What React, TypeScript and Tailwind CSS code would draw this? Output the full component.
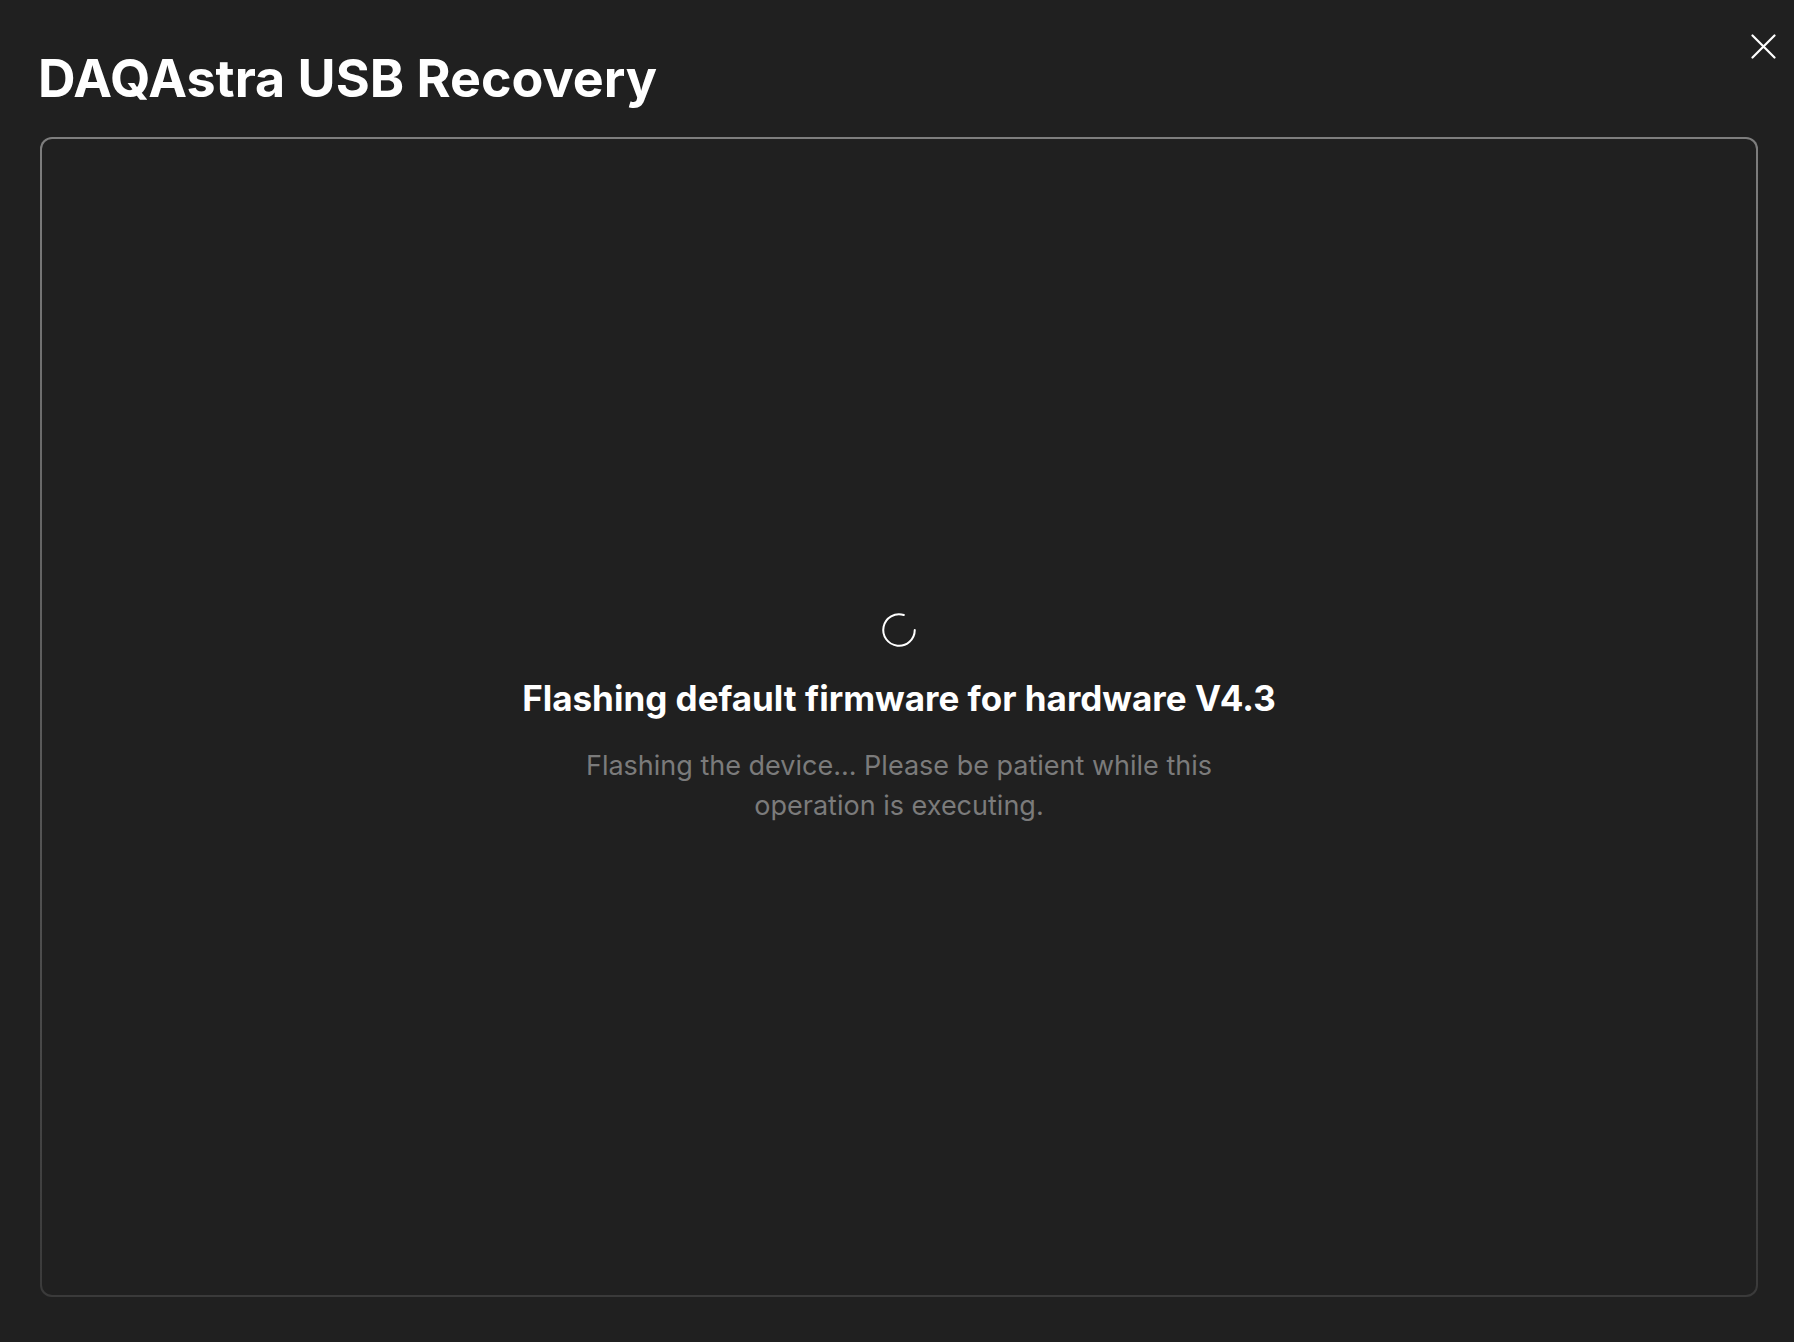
function Spinner() {
    // static ring with a gap near the top-right, like a loader mid-spin
    return (
        <svg width="42" height="42" viewBox="0 0 24 24" fill="none" stroke="#ffffff" strokeWidth="1.15" strokeLinecap="round">
            <path d="M21 12a9 9 0 1 1-6.219-8.56" />
        </svg>
    );
}

function CloseIcon() {
    return (
        <svg width="25" height="25" viewBox="0 0 25 25" fill="none" stroke="#ffffff" strokeWidth="2.2" strokeLinecap="round">
            <path d="M1.5 1.5 L23.5 23.5 M23.5 1.5 L1.5 23.5" />
        </svg>
    );
}

export default function App() {
    return (
        <div
            className="relative flex flex-col h-screen min-h-[1342px] bg-[#202020] pt-[53px] pl-9 pr-9 pb-[45px]"
            style={{ fontFamily: "Inter, 'Noto Sans', 'Liberation Sans', sans-serif" }}
        >
            <button className="absolute top-[34px] right-[18px] flex items-center justify-center" title="Close">
                <CloseIcon />
            </button>

            <h1 className="ml-[2px] text-[52px] leading-[52px] font-bold text-white">
                DAQAstra USB Recovery
            </h1>

            <div className="mt-[32px] ml-1 flex-1 rounded-xl p-[2px] bg-gradient-to-b from-[#7e7e7e] to-[#3a3a3a]">
                <div className="h-full w-full rounded-[10px] bg-[#202020] flex flex-col items-center justify-center">
                    <Spinner />
                    <h2 className="mt-[27px] text-[35px] leading-[40px] font-bold text-white">
                        Flashing default firmware for hardware V4.3
                    </h2>
                    <p className="mt-[28px] max-w-[690px] text-center text-[27px] leading-[40px] text-[#7b7b7b]">
                        Flashing the device... Please be patient while this operation is executing.
                    </p>
                </div>
            </div>
        </div>
    );
}
